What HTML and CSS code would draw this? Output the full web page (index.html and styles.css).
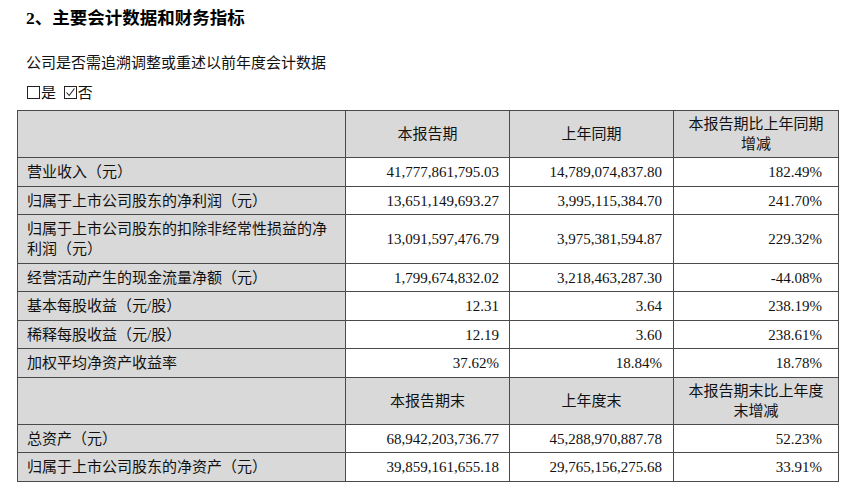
FILE: index.html
```html
<!DOCTYPE html>
<html lang="zh-CN">
<head>
<meta charset="utf-8">
<title>主要会计数据和财务指标</title>
<link rel="stylesheet" href="styles.css">
</head>
<body>
<div class="page">
  <h1 class="title">2、主要会计数据和财务指标</h1>
  <p class="question">公司是否需追溯调整或重述以前年度会计数据</p>
  <p class="options"><svg class="box" width="13" height="13" viewBox="0 0 13 13"><rect x="0.5" y="0.5" width="12" height="12" fill="none" stroke="#222" stroke-width="1"/></svg>是 <svg class="box box-second" width="13" height="13" viewBox="0 0 13 13"><rect x="0.5" y="0.5" width="12" height="12" fill="none" stroke="#222" stroke-width="1"/><path d="M2.5 6.5 L5.2 9.5 L10.5 2.5" fill="none" stroke="#222" stroke-width="1.1"/></svg>否</p>
  <table class="data">
    <colgroup>
      <col class="c1"><col class="c2"><col class="c3"><col class="c4">
    </colgroup>
    <tr class="head">
      <th class="label"></th>
      <th>本报告期</th>
      <th>上年同期</th>
      <th>本报告期比上年同期增减</th>
    </tr>
    <tr>
      <td class="label">营业收入（元）</td>
      <td class="n2">41,777,861,795.03</td>
      <td class="n3">14,789,074,837.80</td>
      <td class="n4">182.49%</td>
    </tr>
    <tr>
      <td class="label">归属于上市公司股东的净利润（元）</td>
      <td class="n2">13,651,149,693.27</td>
      <td class="n3">3,995,115,384.70</td>
      <td class="n4">241.70%</td>
    </tr>
    <tr>
      <td class="label">归属于上市公司股东的扣除非经常性损益的净利润（元）</td>
      <td class="n2">13,091,597,476.79</td>
      <td class="n3">3,975,381,594.87</td>
      <td class="n4">229.32%</td>
    </tr>
    <tr>
      <td class="label">经营活动产生的现金流量净额（元）</td>
      <td class="n2">1,799,674,832.02</td>
      <td class="n3">3,218,463,287.30</td>
      <td class="n4">-44.08%</td>
    </tr>
    <tr>
      <td class="label">基本每股收益（元/股）</td>
      <td class="n2">12.31</td>
      <td class="n3">3.64</td>
      <td class="n4">238.19%</td>
    </tr>
    <tr>
      <td class="label">稀释每股收益（元/股）</td>
      <td class="n2">12.19</td>
      <td class="n3">3.60</td>
      <td class="n4">238.61%</td>
    </tr>
    <tr>
      <td class="label">加权平均净资产收益率</td>
      <td class="n2">37.62%</td>
      <td class="n3">18.84%</td>
      <td class="n4">18.78%</td>
    </tr>
    <tr class="head">
      <th class="label"></th>
      <th>本报告期末</th>
      <th>上年度末</th>
      <th>本报告期末比上年度末增减</th>
    </tr>
    <tr>
      <td class="label">总资产（元）</td>
      <td class="n2">68,942,203,736.77</td>
      <td class="n3">45,288,970,887.78</td>
      <td class="n4">52.23%</td>
    </tr>
    <tr>
      <td class="label">归属于上市公司股东的净资产（元）</td>
      <td class="n2">39,859,161,655.18</td>
      <td class="n3">29,765,156,275.68</td>
      <td class="n4">33.91%</td>
    </tr>
  </table>
</div>
</body>
</html>
```

FILE: styles.css
```css
html, body {
  margin: 0;
  padding: 0;
  background: #ffffff;
}

body {
  font-family: "Liberation Serif", "Noto Sans CJK SC", serif;
  color: #111111;
  font-size: 15px;
}

.page {
  padding: 6px 16px 0 17px;
}

.title {
  margin: 0;
  padding-left: 9px;
  font-size: 17.5px;
  line-height: 24px;
  font-weight: bold;
  color: #000000;
}

.question {
  margin: 22px 0 0 0;
  padding-left: 9px;
  line-height: 22px;
}

.options {
  margin: 8px 0 0 0;
  padding-left: 10px;
  line-height: 22px;
}

.box {
  vertical-align: -1px;
  margin-right: 1px;
}

.box-second {
  margin-left: 4px;
}

.data {
  margin-top: 6px;
  width: 821px;
  table-layout: fixed;
  border-collapse: collapse;
  border: 1px solid #333333;
}

.c1 { width: 328px; }
.c2 { width: 164px; }
.c3 { width: 164px; }
.c4 { width: 165px; }

.data td, .data th {
  border: 1px solid #4a4a4a;
  line-height: 20px;
  padding: 4px 9px 3.5px 9px;
  font-weight: normal;
}

.data th {
  background: #d9d9d9;
  text-align: center;
  padding: 3px 8px 3px 8px;
}

.data td.label {
  background: #d9d9d9;
  text-align: left;
}

.data td.n2 { text-align: right; padding-right: 10px; }
.data td.n3 { text-align: right; padding-right: 11px; }
.data td.n4 { text-align: right; padding-right: 16px; }
```
